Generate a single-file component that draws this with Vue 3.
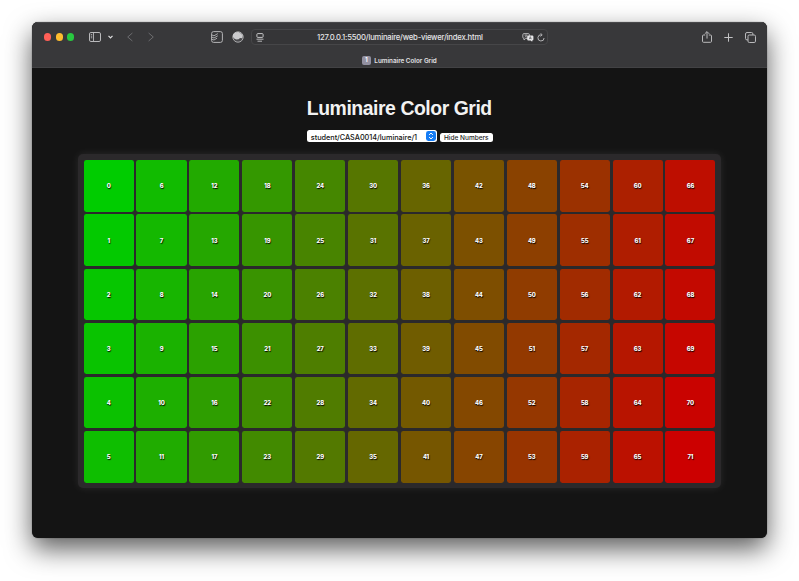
<script setup>
const rows = 6
const columns = 12
const last = rows * columns - 1
// Cells are numbered down each column, fading from green to red.
const cells = Array.from({ length: rows * columns }, (_, i) => {
  const number = (i % columns) * rows + Math.floor(i / columns)
  const red = Math.round((number / last) * 204)
  return { number, color: `rgb(${red}, ${204 - red}, 0)` }
})
</script>

<template>
  <main class="stage">
    <section class="window">
      <header class="chrome">
        <div class="toolbar">
          <div class="side left">
            <div class="lights"><i class="close"></i><i class="minimise"></i><i class="expand"></i></div>
            <svg class="sidebar-icon" width="12" height="10" viewBox="0 0 12 10" fill="none" stroke="#b9b9bb">
              <rect x=".5" y=".5" width="11" height="9" rx="1.4" />
              <path d="M4.5 .8v8.4M1.8 2.6h1.4M1.8 4.2h1.4M1.8 5.8h1.4" stroke-width=".9" />
            </svg>
            <svg class="chevron-down" width="5" height="4" viewBox="0 0 5 4" fill="none" stroke="#dededf" stroke-width="1.2"><path d="M.5 .8 2.5 2.9 4.5 .8" /></svg>
            <svg class="back" width="6" height="10" viewBox="0 0 6 10" fill="none" stroke="#6c6c6f"><path d="M5.4 1 .7 5l4.7 4" /></svg>
            <svg class="forward" width="6" height="10" viewBox="0 0 6 10" fill="none" stroke="#6c6c6f"><path d="M.6 1 5.3 5 .6 9" /></svg>
          </div>
          <div class="middle">
            <svg width="12" height="12" viewBox="0 0 12 12" fill="none" stroke="#b5b5b7">
              <rect x=".6" y=".6" width="10.8" height="10.8" rx="2" />
              <path d="M1 4 3 4.8 6.8 2.6M1 6.2 3 7 6.8 4.8M1 8.4 3 9 6 7.2" stroke-width=".9" />
            </svg>
            <svg class="circle-icon" width="12" height="12" viewBox="0 0 12 12">
              <circle cx="6" cy="6" r="5.2" fill="#4a4a4d" stroke="#b5b5b7" stroke-width=".9" />
              <path d="M1 3.6C2.2 1.6 4 .9 6.5 1L9 2.4l1.8 2.2-.6 2.6-2.2-.2-1.4 1.2-2.4.4L2.2 7.4 1 6Z" fill="#cbcbcd" />
            </svg>
            <div class="address">
              <svg class="page-icon" width="8" height="9" viewBox="0 0 8 9" fill="none" stroke="#c5c5c7">
                <rect x=".9" y=".6" width="6.2" height="3.8" rx=".9" />
                <path d="M.5 6.2h7M1.5 8.2h4.5" stroke-width=".9" />
              </svg>
              <span class="url">127.0.0.1:5500/luminaire/web-viewer/index.html</span>
              <svg class="translate" width="12" height="9" viewBox="0 0 12 9">
                <path d="M2 .6h4.2q1.2 0 1.2 1.2v2.4q0 1.2-1.2 1.2H3.8L2 7V5.4Q.8 5.4.8 4.2V1.8Q.8.6 2 .6Z" fill="none" stroke="#bdbdbf" stroke-width=".9" />
                <path d="M2.3 2.1h3.3M4 1.3v.8M2.6 4.4Q4.6 3.4 5 2.1M3 2.6l2 1.8" fill="none" stroke="#bdbdbf" stroke-width=".6" />
                <path d="M6.4 2.4h3.8q1.2 0 1.2 1.2v2.6q0 1.2-1.2 1.2v1.4L8.6 7.4H6.4Q5.2 7.4 5.2 6.2V3.6q0-1.2 1.2-1.2Z" fill="#e6e6e8" />
                <path d="m7.2 6.2 1.1-2.6 1.1 2.6M7.7 5.4h1.3" fill="none" stroke="#505053" stroke-width=".6" />
              </svg>
              <svg class="reload" width="8" height="9" viewBox="0 0 8 9" fill="none" stroke="#c2c2c4" stroke-width=".9">
                <path d="M4.4 1.8A3.1 3.1 0 1 0 7.1 5M3.5.3l1.7 1.5-1.7 1.6" />
              </svg>
            </div>
          </div>
          <div class="side right">
            <svg class="share" width="10" height="12" viewBox="0 0 10 12" fill="none" stroke="#b9b9bb"><path d="M3.2 4H1.5Q.5 4 .5 5v5.3q0 1 1 1h7q1 0 1-1V5q0-1-1-1H6.8M5 7.6V.8M2.7 2.9 5 .6l2.3 2.3" /></svg>
            <svg class="plus" width="9" height="9" viewBox="0 0 9 9" fill="none" stroke="#c2c2c4"><path d="M4.5 .3v8.4M.3 4.5h8.4" /></svg>
            <svg width="11" height="11" viewBox="0 0 11 11" fill="none" stroke="#b9b9bb"><rect x="3" y="3" width="7.5" height="7.5" rx="1.3" /><path d="M3 7.9h-1Q.5 7.9.5 6.5V2Q.5.5 2 .5h4.5q1.4 0 1.4 1.4V3" /></svg>
          </div>
        </div>
        <div class="tab"><span class="favicon">1</span><span class="tab-title">Luminaire Color Grid</span></div>
      </header>

      <div class="page">
        <h1>Luminaire Color Grid</h1>
        <div class="controls">
          <div class="select" role="combobox">
            <span>student/CASA0014/luminaire/1</span>
            <svg width="10" height="10" viewBox="0 0 10 10"><rect width="10" height="10" rx="2.4" fill="#147cf5" /><path d="M3.1 3.9 5 2.1l1.9 1.8M3.1 6.1 5 7.9l1.9-1.8" fill="none" stroke="#fff" /></svg>
          </div>
          <button type="button">Hide Numbers</button>
        </div>
        <div class="grid">
          <div v-for="cell in cells" :key="cell.number" class="cell" :style="{ backgroundColor: cell.color }">{{ cell.number }}</div>
        </div>
      </div>
    </section>
  </main>
</template>

<style>
body { background: #fff; overflow: hidden; }
</style>

<style scoped>
* { box-sizing: border-box; }
.stage {
  width: 799px;
  height: 581px;
  padding: 22px 32px 43px;
  overflow: hidden;
  font-family: Inter, "Liberation Sans", sans-serif;
}
.window {
  width: 734.6px;
  height: 516px;
  border-radius: 6px;
  overflow: hidden;
  background: #141414;
  box-shadow: 0 0 1px rgba(0, 0, 0, .7), 0 11px 27px rgba(0, 0, 0, .64);
}
.chrome {
  height: 46px;
  background: #38383a;
  border-bottom: 1px solid #424244;
  box-shadow: inset 0 1px #48484a;
}
.toolbar { height: 30px; display: flex; align-items: center; }
.side { display: flex; align-items: center; }
.left { width: 179px; padding-left: 12px; }
.lights { display: flex; gap: 4.4px; }
.lights i { width: 7.2px; height: 7.2px; border-radius: 50%; }
.close { background: #ff5f57; }
.minimise { background: #febc2e; }
.expand { background: #28c840; }
.sidebar-icon { margin-left: 14.6px; }
.chevron-down { margin-left: 7px; }
.back { margin-left: 14px; }
.forward { margin-left: 15px; }
.middle { display: flex; align-items: center; }
.circle-icon { margin-left: 9px; }
.address {
  width: 297px;
  height: 16px;
  margin-left: 7px;
  padding: 0 2px 0 4px;
  display: flex;
  align-items: center;
  border: 1px solid #464648;
  border-radius: 4px;
  background: #353537;
}
.url {
  width: 168px;
  margin: 0 auto 0 53px;
  padding-top: 1px;
  color: #e5e5e7;
  font-size: 7.7px;
  font-weight: 500;
  letter-spacing: -.21px;
  line-height: 10px;
  white-space: nowrap;
}
.reload { margin-left: 3px; }
.right { margin-left: auto; padding-right: 10.6px; }
.plus { margin: 0 12px; }
.tab { display: flex; align-items: center; justify-content: center; height: 17px; gap: 3.5px; }
.favicon {
  width: 9px;
  height: 9px;
  border-radius: 2px;
  background: #9290a0;
  color: #fff;
  font-size: 6.5px;
  font-weight: 600;
  line-height: 9px;
  text-align: center;
}
.tab-title { padding-top: 1px; color: #e2e2e4; font-size: 6.3px; font-weight: 600; line-height: 9px; white-space: nowrap; }
.page { padding: 28px 46px 0; display: flex; flex-direction: column; align-items: center; }
h1 {
  margin: 0;
  color: #f2f2f2;
  font: bold 19.4px/24px "Liberation Sans", Arial, sans-serif;
  letter-spacing: -.45px;
  white-space: nowrap;
}
.controls { margin-top: 10px; height: 12px; display: flex; align-items: center; gap: 3px; padding-left: .6px; }
.select {
  width: 130.4px;
  height: 12px;
  padding: 0 .5px 0 4.2px;
  display: flex;
  align-items: center;
  justify-content: space-between;
  border-radius: 2.5px;
  background: #fff;
  color: #151515;
  font-size: 7.3px;
  font-weight: 500;
  letter-spacing: -.02px;
  white-space: nowrap;
}
.select span { padding-top: 3px; line-height: 9px; }
button {
  width: 52.6px;
  height: 9.5px;
  margin: 2.5px 0 0;
  padding: 1px 0 0;
  border: 0;
  border-radius: 2.5px;
  background: #fff;
  color: #252525;
  font: 500 6.5px/8.5px Inter, sans-serif;
  white-space: nowrap;
}
.grid {
  width: 643px;
  height: 334px;
  margin-top: 12px;
  padding: 6.3px 5.3px 5.5px 5.8px;
  display: grid;
  grid-template-columns: repeat(12, 1fr);
  grid-template-rows: repeat(6, 1fr);
  gap: 2.8px;
  border-radius: 5px;
  background: #2b292b;
  box-shadow: 0 0 8px rgba(255, 255, 255, .09);
}
.cell {
  display: flex;
  align-items: center;
  justify-content: center;
  padding-top: 1px;
  border-radius: 2.4px;
  color: #fff;
  font: 800 5.9px/8px Inter, "Liberation Sans", sans-serif;
  letter-spacing: -.1px;
  text-shadow: .6px .6px 1px #000;
}
</style>
